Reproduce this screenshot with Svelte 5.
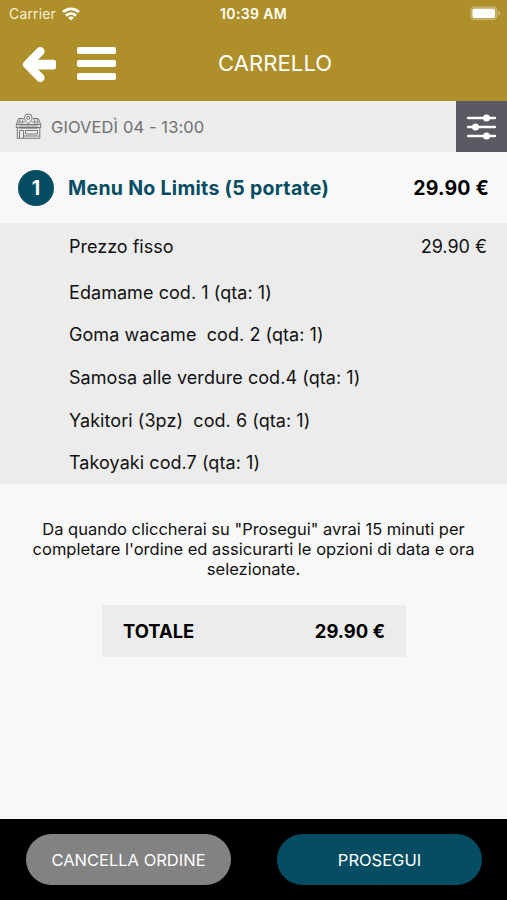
<script lang="ts">
    interface Dish {
        name: string
    }

    const price = '29.90 €'
    const dishes: Array<Dish> = [
        { name: 'Edamame cod. 1 (qta: 1)' },
        { name: 'Goma wacame  cod. 2 (qta: 1)' },
        { name: 'Samosa alle verdure cod.4 (qta: 1)' },
        { name: 'Yakitori (3pz)  cod. 6 (qta: 1)' },
        { name: 'Takoyaki cod.7 (qta: 1)' }
    ]
</script>

<div class="screen">
    <header>
        <div class="status">
            <div class="carrier">
                <span>Carrier</span>
                <svg width="18" height="14" viewBox="0 0 18 14" fill="none" stroke="#fff" stroke-width="2.9">
                    <path d="M1 5C5.600.8 12.400.8 17 5" />
                    <path d="M4 8.600c2.900-2.600 7.100-2.600 10 0" />
                    <path d="M9 13.600 6.100 10.700c1.700-1.500 4.100-1.500 5.800 0z" fill="#fff" stroke="none" />
                </svg>
            </div>
            <span class="time">10:39 AM</span>
            <svg class="battery" width="31" height="15" viewBox="0 0 31 15">
                <rect x=".6" y=".8" width="26.5" height="13" rx="4" fill="#fff" fill-opacity=".25" stroke="#fff" stroke-opacity=".2" />
                <rect x="2.5" y="2.7" width="22.5" height="9.4" rx="2" fill="#fff" />
                <path d="M28.300 5v5c2-.8 2-4.200 0-5z" fill="#fff" fill-opacity=".5" />
            </svg>
        </div>
        <div class="nav">
            <svg class="back" width="35" height="38" viewBox="0 0 35 38">
                <path d="M18.300 6.300 5.300 19.500l13 13.200" fill="none" stroke="#fff" stroke-width="8.600" stroke-linecap="round" stroke-linejoin="round" />
                <rect x="5" y="14.800" width="29" height="9.600" rx="2.500" fill="#fff" />
            </svg>
            <svg class="menu" width="40" height="34" viewBox="0 0 40 34" fill="#fff">
                <rect width="39" height="7" rx="1.8" />
                <rect y="13" width="39" height="7" rx="1.8" />
                <rect y="26" width="39" height="7" rx="1.8" />
            </svg>
            <h1>CARRELLO</h1>
        </div>
    </header>

    <div class="slot">
        <svg class="shop" width="27" height="27" viewBox="0 0 27 27" fill="none" stroke="#77777a">
            <path d="M8.500 5.500h-5L1.300 11.500h24.500l-2.600-6h-5M1.300 11.500v3h24.500v-3M2.300 14v11.300h22.500V14" />
            <path d="M13.300 11C10 7.600 9.500 6.300 9.500 4.800a3.800 3.800 0 0 1 7.600 0c0 1.500-.5 2.800-3.800 6.200z" fill="#ececec" />
            <circle cx="13.300" cy="4.800" r="1.500" />
            <path d="M3 9h7M16.500 9h7M5 6l-1 5M8 6l-1 5M19 6l1 5M22 6l1 5M4 13h19M4 15.300h19" stroke-width=".8" />
            <path d="M4.500 25v-7.500h4V25M10.500 17.500h12v3.500h-12zM9 23h15" />
        </svg>
        <span class="date">GIOVEDÌ 04 - 13:00</span>
        <button class="filters" aria-label="Opzioni">
            <svg width="30" height="26" viewBox="0 0 30 26" fill="#fff">
                <path d="M1 4h27M1 13h27M1 22h27" stroke="#fff" stroke-width="2.300" stroke-linecap="round" />
                <circle cx="19.500" cy="4" r="3.500" />
                <circle cx="8.500" cy="13" r="3.500" />
                <circle cx="19.500" cy="22" r="3.500" />
            </svg>
        </button>
    </div>

    <div class="item">
        <span class="quantity">1</span>
        <span class="name">Menu No Limits (5 portate)</span>
        <span class="amount">{price}</span>
    </div>

    <div class="details">
        <div class="fixed">
            <span>Prezzo fisso</span>
            <span>{price}</span>
        </div>
        <ul>
            {#each dishes as dish}
                <li>{dish.name}</li>
            {/each}
        </ul>
    </div>

    <p class="note">
        Da quando cliccherai su "Prosegui" avrai 15 minuti per<br />
        completare l'ordine ed assicurarti le opzioni di data e ora<br />
        selezionate.
    </p>

    <div class="total">
        <span>TOTALE</span>
        <span>{price}</span>
    </div>

    <footer>
        <button class="cancel">CANCELLA ORDINE</button>
        <button class="proceed">PROSEGUI</button>
    </footer>
</div>

<style>
    :global(body) {
        background: #f8f8f8;
    }
    .screen {
        display: flex;
        flex-direction: column;
        width: 507px;
        height: 900px;
        overflow: hidden;
        background: #f8f8f8;
        color: #111;
        font-family: Inter, "Liberation Sans", sans-serif;
        font-size: 18px;
    }
    button {
        border: 0;
        padding: 0;
        font-family: inherit;
        color: #fff;
    }
    header {
        height: 101px;
        background: #ae8f29;
        color: #fff;
    }
    .status {
        display: grid;
        grid-template-columns: 1fr auto 1fr;
        align-items: center;
        height: 27px;
        padding: 0 6px;
        font-size: 14px;
    }
    .carrier {
        display: flex;
        align-items: center;
        gap: 6px;
        padding-left: 3px;
        color: #f7f0d8;
        letter-spacing: 0.15px;
    }
    .time {
        font-weight: 600;
        letter-spacing: 0.35px;
    }
    .battery {
        justify-self: end;
    }
    .nav {
        display: flex;
        align-items: center;
        height: 74px;
        padding-left: 22px;
    }
    .menu {
        margin-left: 20px;
    }
    h1 {
        margin: 0 0 0 101px;
        font-size: 22px;
        font-weight: 400;
        line-height: 26px;
        letter-spacing: 0.1px;
        padding-bottom: 2px;
    }
    .slot {
        display: flex;
        align-items: center;
        height: 51px;
        padding-left: 15px;
        background: #ececec;
        color: #6f6f72;
    }
    .date {
        margin-left: 9px;
        font-size: 16.5px;
        letter-spacing: 0.1px;
    }
    .filters {
        display: grid;
        place-items: center;
        width: 51px;
        height: 51px;
        margin-left: auto;
        background: #5a5a62;
    }
    .item {
        display: flex;
        align-items: center;
        height: 71px;
        padding: 0 18px;
        font-weight: 700;
        font-size: 19.5px;
    }
    .quantity {
        display: grid;
        place-items: center;
        width: 36px;
        height: 36px;
        border-radius: 50%;
        background: #054d63;
        color: #fff;
    }
    .name {
        margin-left: 14px;
        color: #054d63;
        letter-spacing: 0.3px;
    }
    .amount {
        margin-left: auto;
        color: #000;
        letter-spacing: 0.2px;
    }
    .details {
        height: 261px;
        background: #ececec;
    }
    .fixed {
        display: flex;
        align-items: center;
        justify-content: space-between;
        height: 46px;
        padding: 0 20px 2px 69px;
    }
    ul {
        margin: 0;
        padding: 0 0 0 69px;
        list-style: none;
    }
    li {
        display: flex;
        align-items: center;
        height: 42.6px;
        white-space: pre;
        letter-spacing: 0.06px;
    }
    .note {
        height: 60px;
        margin: 35px 0 26px;
        text-align: center;
        font-size: 16.5px;
        line-height: 20px;
        white-space: nowrap;
    }
    .total {
        display: flex;
        align-items: center;
        justify-content: space-between;
        width: 262px;
        height: 52px;
        margin-left: 102px;
        padding: 0 21px;
        background: #ececec;
        color: #000;
        font-size: 18.4px;
        font-weight: 700;
    }
    footer {
        display: flex;
        justify-content: space-between;
        height: 81px;
        margin-top: auto;
        padding: 15px 25px 0 26px;
        box-sizing: border-box;
        background: #000;
    }
    footer button {
        width: 205px;
        height: 51px;
        border-radius: 26px;
        font-size: 16.5px;
    }
    .cancel {
        background: #828282;
    }
    .proceed {
        background: #054d63;
    }
</style>
